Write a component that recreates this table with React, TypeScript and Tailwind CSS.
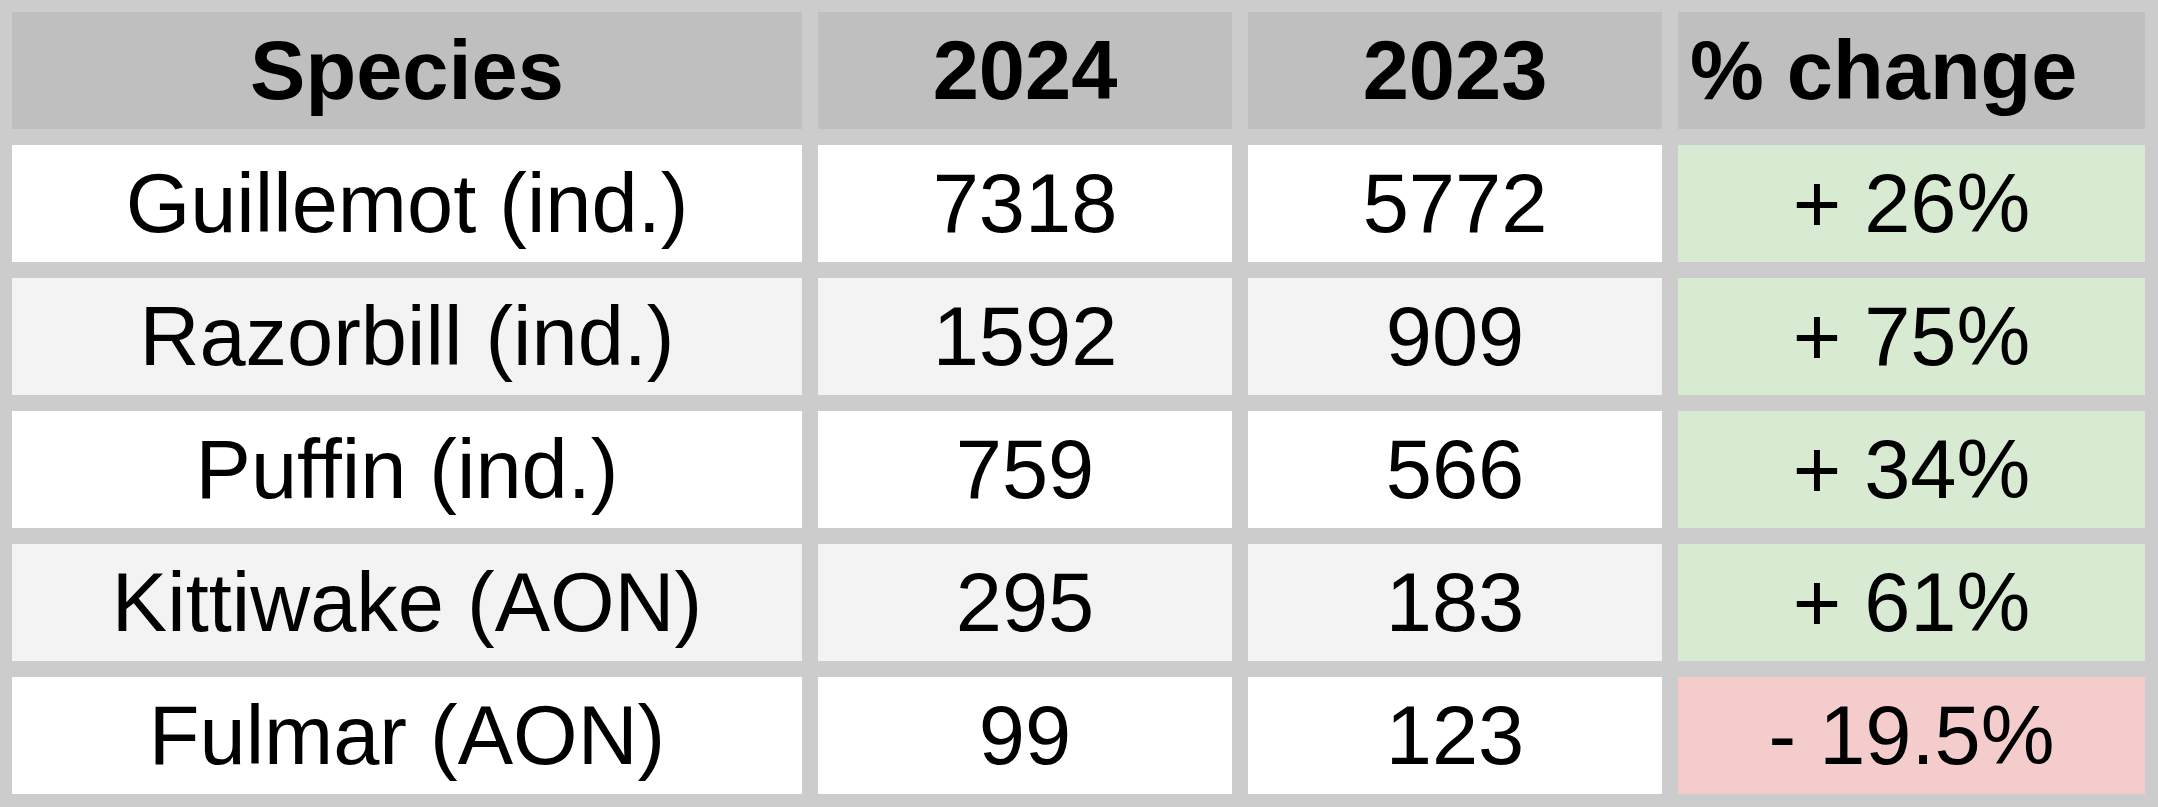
const header = ['Species', '2024', '2023'];

type Row = { species: string; y2024: string; y2023: string; change: string; up: boolean };

const rows: Row[] = [
  { species: 'Guillemot (ind.)', y2024: '7318', y2023: '5772', change: '+ 26%', up: true },
  { species: 'Razorbill (ind.)', y2024: '1592', y2023: '909', change: '+ 75%', up: true },
  { species: 'Puffin (ind.)', y2024: '759', y2023: '566', change: '+ 34%', up: true },
  { species: 'Kittiwake (AON)', y2024: '295', y2023: '183', change: '+ 61%', up: true },
  { species: 'Fulmar (AON)', y2024: '99', y2023: '123', change: '- 19.5%', up: false },
];

const cell = 'h-[117px] flex items-center justify-center whitespace-nowrap';

export default function App() {
  return (
    <div className="w-[2158px] h-[807px] bg-[#cccccc] pt-[12px] pl-[12px] pr-[13px] pb-[13px] text-black font-['Liberation_Sans',Arial,sans-serif]">
      <div className="grid grid-cols-[790px_414px_414px_467px] gap-[16px] text-[83px] leading-none">
        {header.map((h) => (
          <div key={h} className={`${cell} bg-[#bfbfbf] font-bold`}>
            {h}
          </div>
        ))}
        <div className="h-[117px] flex items-center justify-start pl-[12px] whitespace-nowrap bg-[#bfbfbf] font-bold">
          % change
        </div>
        {rows.map((r, i) => {
          const bg = i % 2 === 1 ? 'bg-[#f3f3f3]' : 'bg-white';
          return [
            <div key={`${r.species}-s`} className={`${cell} ${bg}`}>{r.species}</div>,
            <div key={`${r.species}-a`} className={`${cell} ${bg}`}>{r.y2024}</div>,
            <div key={`${r.species}-b`} className={`${cell} ${bg}`}>{r.y2023}</div>,
            <div
              key={`${r.species}-c`}
              className={`${cell} ${r.up ? 'bg-[#d9ead3]' : 'bg-[#f4cccc]'}`}
            >
              {r.change}
            </div>,
          ];
        })}
      </div>
    </div>
  );
}
